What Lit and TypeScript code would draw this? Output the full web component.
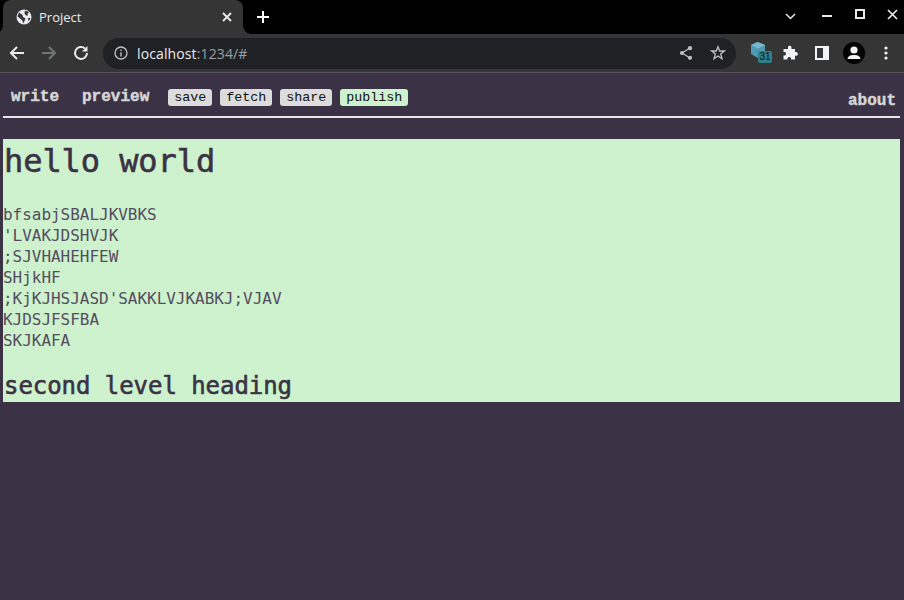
import { LitElement, html, css } from "lit";
import { customElement } from "lit/decorators.js";

@customElement("app-root")
export class AppRoot extends LitElement {
  static styles = css`
    :host { display: block; width: 904px; height: 600px; overflow: hidden; background: #3b3245; font-family: "Open Sans", "Noto Sans", sans-serif; }
    svg { display: block; flex: none; }
    .tabstrip { height: 34px; background: #000; display: flex; align-items: flex-end; }
    .tab { position: relative; width: 240px; height: 34px; margin-left: 3px; background: #353535; border-radius: 8px 8px 0 0; display: flex; align-items: center; box-sizing: border-box; padding: 0 10px 0 13px; color: #e8eaed; font-size: 13px; }
    .tab::before, .tab::after { content: ""; position: absolute; bottom: 0; width: 8px; height: 8px; }
    .tab::before { left: -8px; background: radial-gradient(circle at 0 0, #000 7.5px, #353535 8px); }
    .tab::after { right: -8px; background: radial-gradient(circle at 100% 0, #000 7.5px, #353535 8px); }
    .tab .title { margin-left: 7px; flex: 1; }
    .plus { margin-left: 13px; align-self: center; }
    .winctl { margin-left: auto; display: flex; align-items: center; align-self: flex-start; height: 28px; }
    .chev { margin-right: 26px; margin-top: 4px; }
    .min { margin-right: 23px; margin-top: 4px; }
    .max { margin-right: 22px; }
    .close { margin-right: 6px; }
    .toolbar { height: 38px; background: #353535; display: flex; align-items: center; border-bottom: 1px solid #56525a; }
    .nav { display: flex; align-items: center; gap: 14px; margin-left: 8px; margin-right: 13px; }
    .omni { width: 633px; height: 31px; border-radius: 16px; background: #202124; display: flex; align-items: center; padding: 0 10px 0 11px; box-sizing: border-box; font-size: 14px; color: #e8eaed; }
    .url { margin-left: 9px; flex: 1; letter-spacing: 0.12px; }
    .url span { color: #9aa0a6; }
    .omni .star { margin-left: 16px; }
    .ext { display: flex; align-items: center; margin-left: 14px; }
    .cube { position: relative; width: 22px; height: 24px; }
    .badge { position: absolute; left: 8px; top: 10px; width: 14px; height: 12px; background: #2f8088; border-radius: 2px; color: #111; font: 10px/12px "Liberation Sans", sans-serif; text-align: center; }
    .ext .puzzle { margin-left: 10px; }
    .ext .side { margin-left: 17px; }
    .ext .avatar { margin-left: 14px; }
    .ext .dots { margin-left: 19px; }
    .page { padding: 0 4px 0 3px; }
    nav { height: 43px; border-bottom: 2px solid #e6e6e6; display: flex; align-items: flex-start; padding: 0 4px 0 8px; font: bold 16px/18px "Liberation Mono", monospace; color: #d6d6d6; -webkit-text-stroke: 0.45px #d6d6d6; }
    nav a { margin: 15px 23px 0 0; }
    nav a.prev { margin-right: 19px; }
    nav .tools { display: flex; gap: 8px; margin-top: 16px; -webkit-text-stroke: 0; }
    nav button { all: unset; font: 13.33px/17px "Liberation Mono", monospace; color: #111; background: #dcdcdc; border-radius: 3px; height: 17px; padding: 0 6px; }
    nav button.pub { background: #cdf2cd; }
    nav .about { margin: 19px 0 0 auto; }
    main { margin-top: 21px; background: #cdf2cd; color: #3b3245; height: 263px; overflow: hidden; font-family: "DejaVu Sans Mono", monospace; }
    h1 { margin: 0; padding-left: 1px; font: 400 32px/44px "DejaVu Sans Mono", monospace; letter-spacing: -0.07px; -webkit-text-stroke: 0.6px #3b3245; }
    .body { margin: 21px 0 0; font-size: 16px; line-height: 21px; white-space: pre; letter-spacing: -0.03px; color: #554d5f; }
    h2 { margin: 20px 0 0; padding-left: 1px; font: 400 24px/30px "DejaVu Sans Mono", monospace; letter-spacing: -0.05px; -webkit-text-stroke: 0.6px #3b3245; }
  `;

  render() {
    const lines = ["bfsabjSBALJKVBKS", "'LVAKJDSHVJK", ";SJVHAHEHFEW", "SHjkHF", ";KjKJHSJASD'SAKKLVJKABKJ;VJAV", "KJDSJFSFBA", "SKJKAFA"];
    return html`
      <div class="tabstrip">
        <div class="tab">
          <svg width="16" height="16" viewBox="0 0 16 16"><circle cx="8" cy="8" r="7.5" fill="#e8eaed"/><path d="M3 3.5 6.5 6 7 8 9.5 9.5 8.5 12 7 14.5 6.5 11.5 3.5 9 1.5 7.5ZM9 1.5 13 3 11.500 5 12 6.500 10 6.500 8.500 4.500ZM12 9 14.500 9 12.500 12.500Z" fill="#353535"/></svg>
          <span class="title">Project</span>
          <svg width="12" height="12" viewBox="0 0 12 12"><path d="M2 2 10 10M10 2 2 10" stroke="#e8eaed" stroke-width="1.8"/></svg>
        </div>
        <svg class="plus" width="14" height="14" viewBox="0 0 14 14"><path d="M7 1V13M1 7H13" stroke="#fff" stroke-width="2"/></svg>
        <div class="winctl">
          <svg class="chev" width="11" height="7" viewBox="0 0 11 7"><path d="M1 1 5.500 5.500 10 1" fill="none" stroke="#e8e8e8" stroke-width="1.500"/></svg>
          <svg class="min" width="10" height="2" viewBox="0 0 10 2"><rect width="10" height="2" fill="#e8e8e8"/></svg>
          <svg class="max" width="10" height="10" viewBox="0 0 10 10"><rect x="1" y="1" width="8" height="8" fill="none" stroke="#e8e8e8" stroke-width="2"/></svg>
          <svg class="close" width="11" height="11" viewBox="0 0 11 11"><path d="M1 1 10 10M10 1 1 10" stroke="#e8e8e8" stroke-width="1.700"/></svg>
        </div>
      </div>
      <div class="toolbar">
        <div class="nav">
          <svg width="18" height="18" viewBox="0 0 18 18"><path d="M16 9H3M9 3 3 9 9 15" fill="none" stroke="#e8eaed" stroke-width="2"/></svg>
          <svg width="18" height="18" viewBox="0 0 18 18"><path d="M2 9H15M9 3 15 9 9 15" fill="none" stroke="#6f7674" stroke-width="2"/></svg>
          <svg width="18" height="18" viewBox="0 0 18 18"><path d="M15 9A6 6 0 1 1 13 4.500" fill="none" stroke="#e8eaed" stroke-width="2"/><path d="M15.500 2V7.500H10Z" fill="#e8eaed"/></svg>
        </div>
        <div class="omni">
          <svg width="14" height="14" viewBox="0 0 14 14"><circle cx="7" cy="7" r="6" fill="none" stroke="#bdc1c6" stroke-width="1.300"/><path d="M7 6.200V10.500M7 3.500V5" stroke="#bdc1c6" stroke-width="1.400"/></svg>
          <span class="url">localhost<span>:1234/#</span></span>
          <svg width="16" height="16" viewBox="0 0 16 16"><path d="M12 3 4 8 12 13" fill="none" stroke="#bdc1c6" stroke-width="1.200"/><circle cx="12" cy="3.200" r="2.100" fill="#bdc1c6"/><circle cx="4" cy="8" r="2.100" fill="#bdc1c6"/><circle cx="12" cy="12.800" r="2.100" fill="#bdc1c6"/></svg>
          <svg class="star" width="16" height="16" viewBox="0 0 16 16"><path d="M8 1.800 9.700 6H14.400L10.700 9 12 13.700 8 11 4 13.700 5.300 9 1.600 6H6.300Z" fill="none" stroke="#bdc1c6" stroke-width="1.300"/></svg>
        </div>
        <div class="ext">
          <div class="cube">
            <svg width="16" height="18" viewBox="0 0 16 18"><path d="M7.500 1 15 4V12L8 17 1 13V4Z" fill="#4e9ab5"/><path d="M1 4 8 7.500 15 4 7.500 1Z" fill="#74b9cf"/></svg>
            <div class="badge">31</div>
          </div>
          <svg class="puzzle" width="16" height="16" viewBox="0 0 16 16"><path d="M6 1.500A2 2 0 0 1 9.500 2.500V4H13V7H14.500A2 2 0 0 1 14.500 10.800H13V14.500H9V13A2 2 0 0 0 5.500 13V14.500H1.500V10.500H3A2 2 0 0 0 3 7H1.500V4H6Z" fill="#f1f3f4"/></svg>
          <svg class="side" width="14" height="14" viewBox="0 0 14 14"><path fill-rule="evenodd" d="M0 0H14V14H0ZM2 2V12H8V2Z" fill="#f1f3f4"/></svg>
          <svg class="avatar" width="22" height="22" viewBox="0 0 22 22"><circle cx="11" cy="11" r="11" fill="#000"/><circle cx="11" cy="8" r="3.600" fill="#f1f3f4"/><path d="M4.500 17C5 13.500 8 13 11 13S17 13.500 17.500 17Z" fill="#f1f3f4"/></svg>
          <svg class="dots" width="4" height="14" viewBox="0 0 4 14"><circle cx="2" cy="2" r="1.600" fill="#f1f3f4"/><circle cx="2" cy="7" r="1.600" fill="#f1f3f4"/><circle cx="2" cy="12" r="1.600" fill="#f1f3f4"/></svg>
        </div>
      </div>
      <div class="page">
        <nav>
          <a>write</a><a class="prev">preview</a>
          <div class="tools">
            <button>save</button><button>fetch</button><button>share</button><button class="pub">publish</button>
          </div>
          <a class="about">about</a>
        </nav>
        <main>
          <h1>hello world</h1>
          <div class="body">${lines.join("\n")}</div>
          <h2>second level heading</h2>
        </main>
      </div>
    `;
  }
}
